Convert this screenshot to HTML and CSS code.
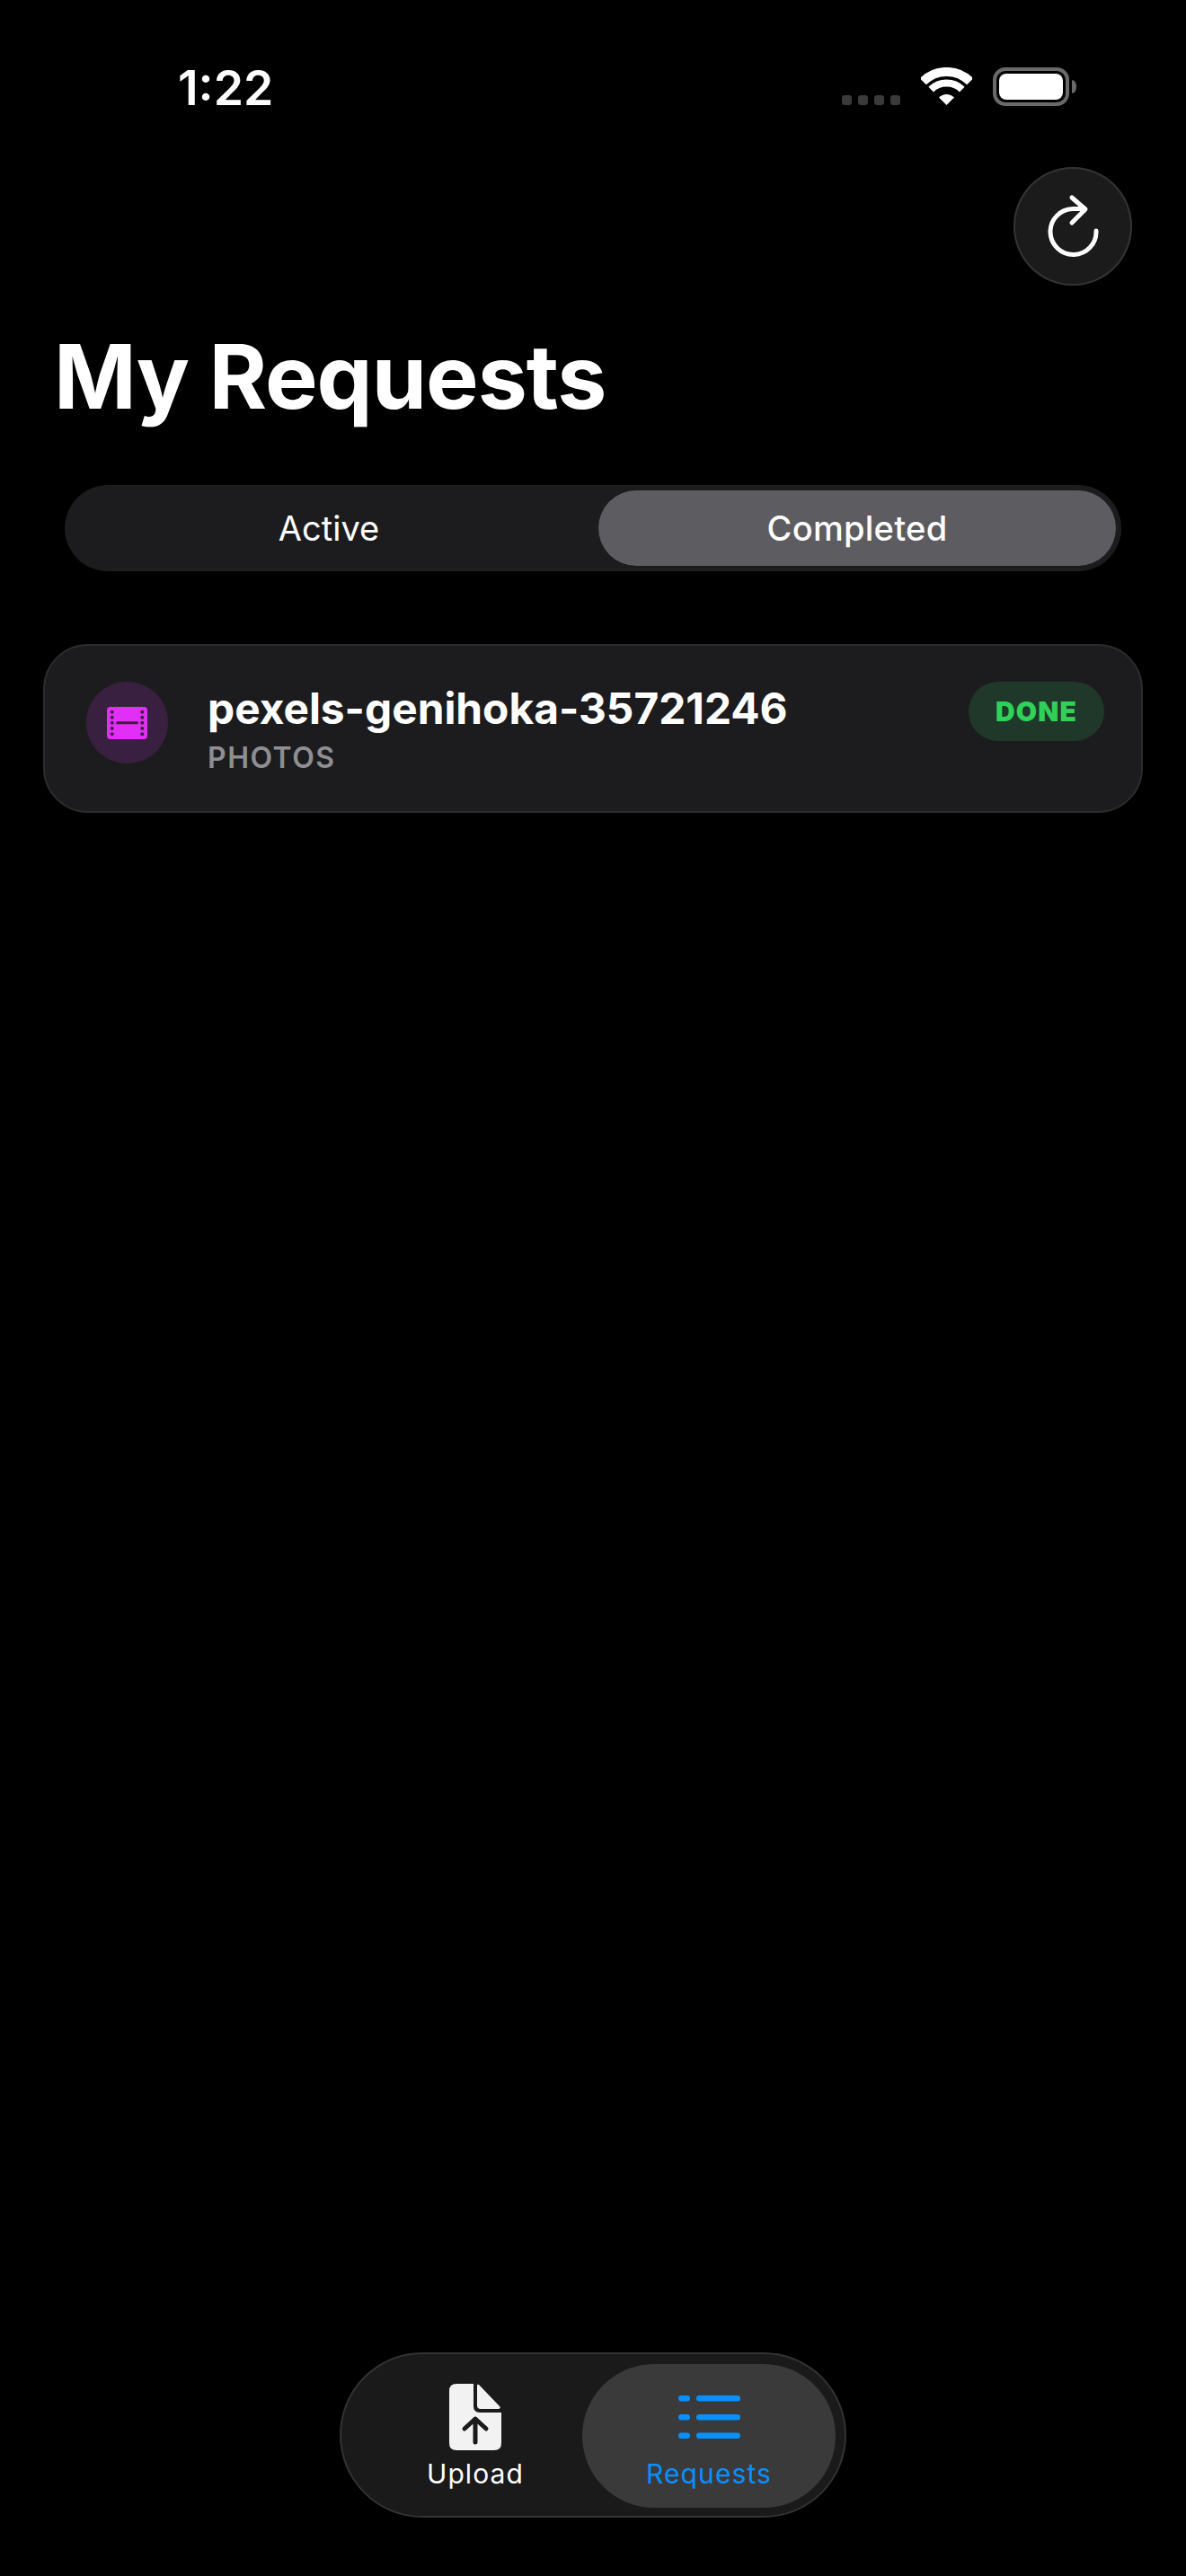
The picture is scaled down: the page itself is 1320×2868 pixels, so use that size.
FILE: index.html
```html
<!DOCTYPE html>
<html lang="en">
<head>
<meta charset="utf-8">
<title>My Requests</title>
<link rel="stylesheet" href="styles.css">
</head>
<body>
<div class="page">
  <header class="status">
    <span class="time">1:22</span>
    <div class="status-right">
      <div class="signal"><i></i><i></i><i></i><i></i></div>
      <svg class="wifi" width="57" height="42" viewBox="0 0 57 42">
        <path d="M2.3 15.8A37 37 0 0 1 54.7 15.8" fill="none" stroke="#fff" stroke-width="10"/>
        <path d="M11.2 24.7A24.5 24.5 0 0 1 45.8 24.7" fill="none" stroke="#fff" stroke-width="8"/>
        <path d="M28.5 42L20 33.5A12 12 0 0 1 37 33.5Z" fill="#fff"/>
      </svg>
      <svg class="battery" width="93" height="43" viewBox="0 0 93 43">
        <rect x="2" y="2" width="81" height="39" rx="12" fill="none" stroke="#6a6a6a" stroke-width="4"/>
        <rect x="7" y="7" width="71" height="29" rx="8" fill="#fff"/>
        <path d="M88 14Q93 15 93 21.500Q93 28 88 29Z" fill="#6a6a6a"/>
      </svg>
    </div>
  </header>

  <div class="toolbar">
    <button class="refresh" type="button" aria-label="Refresh">
      <svg width="132" height="132" viewBox="0 0 132 132" fill="none" stroke="#fff" stroke-width="5" stroke-linecap="round" stroke-linejoin="round">
        <path d="M92 71A25.500 25.500 0 1 1 66 46.500H79"/>
        <path d="M65 34L80 47L65 62"/>
      </svg>
    </button>
  </div>

  <h1 class="title">My Requests</h1>

  <div class="segmented">
    <div class="segment">Active</div>
    <div class="segment segment-on">Completed</div>
  </div>

  <section class="card">
    <div class="thumb">
      <svg width="45" height="36" viewBox="0 0 45 36">
        <rect width="45" height="36" rx="4" fill="#e22ff5"/>
        <g fill="#3a2040">
          <circle cx="5.700" cy="5.700" r="2"/><circle cx="5.700" cy="11.700" r="2"/><circle cx="5.700" cy="17.800" r="2"/><circle cx="5.700" cy="24" r="2"/><circle cx="5.700" cy="30.300" r="2"/>
          <circle cx="39.300" cy="5.700" r="2"/><circle cx="39.300" cy="11.700" r="2"/><circle cx="39.300" cy="17.800" r="2"/><circle cx="39.300" cy="24" r="2"/><circle cx="39.300" cy="30.300" r="2"/>
          <rect x="10" y="16.300" width="25" height="3" rx="1.500"/>
        </g>
      </svg>
    </div>
    <div class="card-text">
      <div class="card-name">pexels-genihoka-35721246</div>
      <div class="card-type">PHOTOS</div>
    </div>
    <span class="badge">DONE</span>
  </section>

  <nav class="tabbar">
    <div class="tab">
      <svg width="58" height="74" viewBox="0 0 58 74">
        <path d="M8 0H27V25Q27 32 34 32H58V66Q58 74 50 74H8Q0 74 0 66V8Q0 0 8 0Z" fill="#f2f2f2"/>
        <path d="M31 2Q31 0 33 1L56 25Q58 27 55 28H35Q31 28 31 24Z" fill="#f2f2f2"/>
        <path d="M29 65V39M17 50L29 39L41 50" fill="none" stroke="#1a1a1a" stroke-width="5" stroke-linecap="round" stroke-linejoin="round"/>
      </svg>
      <span class="tab-label">Upload</span>
    </div>
    <div class="tab tab-on">
      <svg class="list-icon" width="69" height="48" viewBox="0 0 69 48" fill="#0a8fff">
        <rect y="0" width="13" height="6.500" rx="3.250"/><rect x="20" y="0" width="49" height="6.500" rx="3.250"/>
        <rect y="21" width="13" height="6.500" rx="3.250"/><rect x="20" y="21" width="49" height="6.500" rx="3.250"/>
        <rect y="41.500" width="13" height="6.500" rx="3.250"/><rect x="20" y="41.500" width="49" height="6.500" rx="3.250"/>
      </svg>
      <span class="tab-label">Requests</span>
    </div>
  </nav>
</div>
</body>
</html>
```

FILE: styles.css
```css
* { box-sizing: border-box; }
html, body { margin: 0; background: #000; }
body { font-family: Inter, "Liberation Sans", sans-serif; color: #fff; }

.page {
  height: 2868px;
  display: flex;
  flex-direction: column;
  overflow: hidden;
}

/* status bar */
.status {
  height: 186px;
  flex: none;
  display: flex;
  justify-content: space-between;
  align-items: flex-start;
  padding: 0 122px 0 198px;
}
.time {
  margin-top: 67px;
  font-size: 53.500px;
  line-height: 62px;
  font-weight: 600;
}
.status-right {
  margin-top: 75px;
  display: flex;
  align-items: flex-start;
}
.signal {
  display: flex;
  gap: 7px;
  margin-top: 31px;
  margin-right: 23px;
}
.signal i {
  display: block;
  width: 11px;
  height: 11px;
  border-radius: 3px;
  background: #3a3a3a;
}
.wifi { display: block; margin-right: 23px; }
.battery { display: block; }

/* toolbar */
.toolbar {
  flex: none;
  display: flex;
  justify-content: flex-end;
  padding-right: 60px;
}
.refresh {
  width: 132px;
  height: 132px;
  padding: 0;
  border: 0;
  border-radius: 50%;
  background: #1b1b1b;
  box-shadow: inset 0 0 0 2px #333;
  position: relative;
}
.refresh svg { display: block; }

.title {
  margin: 41px 0 0 60px;
  font-size: 98.500px;
  line-height: 122px;
  font-weight: 700;
  letter-spacing: -1px;
}

/* segmented control */
.segmented {
  flex: none;
  margin: 59px 72px 0;
  height: 96px;
  padding: 6px;
  display: flex;
  gap: 12px;
  border-radius: 48px;
  background: #1c1c1e;
}
.segment {
  flex: 1;
  display: flex;
  align-items: center;
  justify-content: center;
  border-radius: 42px;
  font-size: 38px;
  font-weight: 400;
}
.segment-on { background: #5c5c61; font-weight: 500; letter-spacing: 0.300px; }

/* card */
.card {
  flex: none;
  margin: 81px 48px 0;
  height: 188px;
  display: flex;
  align-items: flex-start;
  padding: 40px 41px 0 46px;
  background: #1c1c1e;
  border: 2px solid #2c2c2e;
  border-radius: 50px;
}
.thumb {
  width: 91px;
  height: 91px;
  flex: none;
  border-radius: 50%;
  background: #3a2040;
  display: flex;
  align-items: center;
  justify-content: center;
}
.card-text { flex: 1; margin-left: 44px; padding-top: 2px; }
.card-name {
  font-size: 47.800px;
  line-height: 56px;
  font-weight: 700;
}
.card-type {
  margin-top: 8px;
  font-size: 32px;
  line-height: 38px;
  font-weight: 600;
  letter-spacing: 1.500px;
  color: #8e8e93;
}
.badge {
  width: 151px;
  height: 66px;
  flex: none;
  border-radius: 33px;
  background: #20382a;
  color: #30d158;
  font-size: 30px;
  font-weight: 900;
  letter-spacing: 1.200px;
  display: flex;
  align-items: center;
  justify-content: center;
}

/* tab bar */
.tabbar {
  flex: none;
  width: 564px;
  height: 184px;
  margin: auto 0 65px 378px;
  padding: 11px 10px 9px 30px;
  display: flex;
  justify-content: space-between;
  border-radius: 92px;
  background: #1a1a1a;
  border: 2px solid #333;
}
.tab {
  width: 238px;
  display: flex;
  flex-direction: column;
  align-items: center;
  padding-top: 22px;
  border-radius: 80px;
}
.tab-on {
  width: 282px;
  background: #3a3a3a;
  color: #0a8fff;
  padding-top: 35px;
}
.list-icon { margin-bottom: 13px; }
.tab-label {
  font-size: 30px;
  line-height: 36px;
  font-weight: 400;
  letter-spacing: 1.100px;
  margin-top: 8px;
}
```
